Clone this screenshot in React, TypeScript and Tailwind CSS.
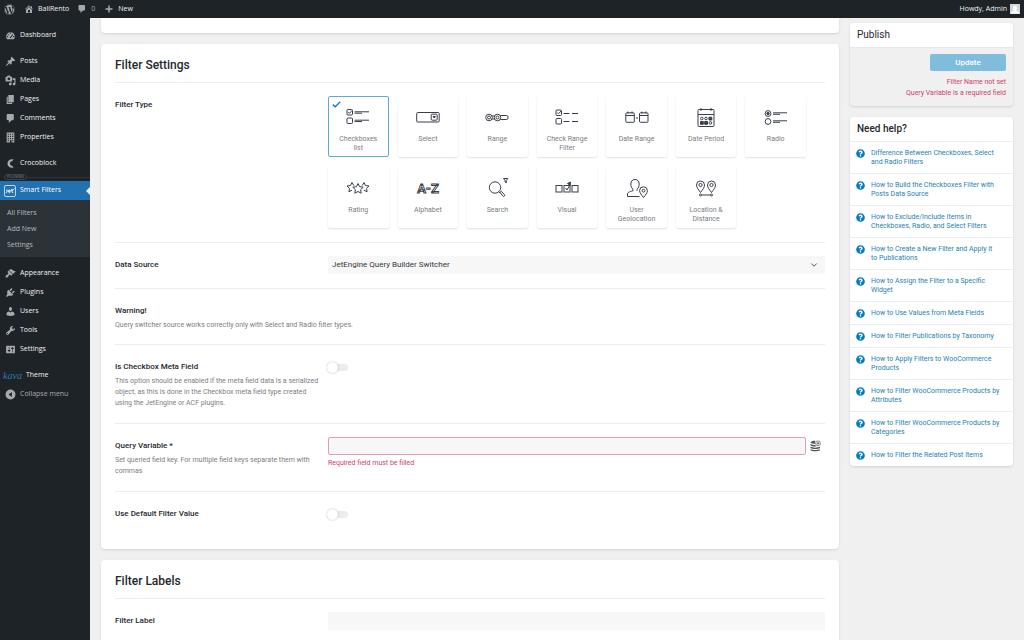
import { useState } from "react";
import type { ReactNode } from "react";
import { ChevronDown } from "lucide-react";
import { FaWordpress, FaQuestionCircle } from "react-icons/fa";

const dashicons = {
    home: "M16 8.5l1.53 1.53-1.06 1.06L10 4.6l-6.47 6.49-1.06-1.06L10 2.5l4 4v-2h2v4zm-6-2.46l6 5.99V18H4v-5.97zM12 17v-5H8v5h4z",
    comments: "M5 2h9c1.1 0 2 .9 2 2v7c0 1.1-.9 2-2 2h-2l-5 5v-5H5c-1.1 0-2-.9-2-2V4c0-1.1.9-2 2-2z",
    plus: "M17 8.5v3h-5.5V17h-3v-5.5H3v-3h5.5V3h3v5.5z",
    dashboard: "M3.76 17h12.48c1.1-1.46 1.76-3.26 1.76-5.2 0-4.2-3.58-7.8-8-7.8s-8 3.6-8 7.8c0 1.94.65 3.74 1.76 5.2zM9 5h2v2H9zM5 7.500h2v2H5zM13.5 7.5L15 9l-4 4.5c0 1-.5 1.5-1.2 1.5s-1.3-.5-1.3-1.2.5-1.3 1.3-1.3zM3.5 11h2v2h-2zM15 11h2v2h-2z",
    post: "M10.44 3.02l1.82-1.82 6.36 6.35-1.83 1.82c-1.05-.68-2.48-.57-3.41.36l-.75.75c-.92.93-1.04 2.35-.35 3.41l-1.83 1.82-2.41-2.41-2.8 2.79c-.42.42-3.38 2.71-3.8 2.29s1.86-3.39 2.28-3.81l2.79-2.79L4.1 9.36l1.83-1.82c1.05.69 2.48.57 3.4-.36l.75-.75c.93-.92 1.05-2.35.36-3.41z",
    media: "M13 11V4c0-.55-.45-1-1-1h-1.67L9 1H5L3.67 3H2c-.55 0-1 .45-1 1v7c0 .55.45 1 1 1h10c.55 0 1-.45 1-1zM7 4.5c1.38 0 2.5 1.12 2.5 2.5S8.38 9.5 7 9.5 4.5 8.38 4.5 7 5.62 4.5 7 4.5zM14 6h5v10.5c0 1.38-1.12 2.5-2.5 2.5S14 17.88 14 16.5s1.12-2.5 2.5-2.5c.17 0 .34.02.5.05V9h-3V6zm-4 8.05V13h2v3.5c0 1.38-1.12 2.5-2.5 2.5S7 17.88 7 16.5 8.12 14 9.5 14c.17 0 .34.02.5.05z",
    page: "M6 15V2h10v13H6zm-1 1h8v2H3V5h2v11z",
    building: "M3 1h14v18h-5v-4H9v4H3zM5 3v2h2V3zM9 3v2h2V3zM13 3v2h2V3zM5 7v2h2V7zM9 7v2h2V7zM13 7v2h2V7zM5 11v2h2v-2zM9 11v2h2v-2zM13 11v2h2v-2zM5 15v2h2v-2zM13 15v2h2v-2z",
    croco: "M15.5 2.5C9 1 4.5 5 4.5 10s4.5 9 11 7.5L13 14c-2.5 0-4-1.8-4-4s1.5-4 4-4z",
    appearance: "M14.48 11.06L7.41 3.99l1.5-1.5c.5-.56 2.3-.47 3.51.32 1.21.8 1.43 1.28 2.91 2.1 1.18.64 2.45 1.26 4.45.85zm-.71.71L6.7 4.7 4.93 6.47c-.39.39-.39 1.02 0 1.41l1.06 1.06c.39.39.39 1.03 0 1.42-.6.6-1.43 1.11-2.21 1.69-.35.26-.7.53-1.01.84C1.43 14.23.4 16.08 1.4 17.07c.99 1 2.84-.03 4.18-1.36.31-.31.58-.66.85-1.02.57-.78 1.08-1.61 1.69-2.21.39-.39 1.02-.39 1.41 0l1.06 1.06c.39.39 1.02.39 1.41 0z",
    plugins: "M13.11 4.36L9.87 7.6 8 5.73l3.24-3.24c.35-.34 1.05-.2 1.56.32.52.51.66 1.21.31 1.55zm-8 1.77l.91-1.12 9.01 9.01-1.19.84c-.71.71-2.63 1.16-3.82 1.16H6.14L4.9 17.26c-.59.59-1.54.59-2.12 0-.59-.58-.59-1.53 0-2.12l1.24-1.24v-3.88c0-1.13.4-3.19 1.09-3.89zm7.26 3.97l3.24-3.24c.34-.35 1.04-.21 1.55.31.52.51.66 1.21.31 1.55l-3.24 3.25z",
    users: "M10 9.25c-2.27 0-2.73-3.44-2.73-3.44C7 4.02 7.82 2 9.97 2c2.16 0 2.98 2.02 2.71 3.81 0 0-.41 3.44-2.68 3.44zm0 2.57L12.72 10c2.39 0 4.52 2.33 4.52 4.53v2.49s-3.65 1.13-7.24 1.13c-3.65 0-7.24-1.13-7.24-1.13v-2.49c0-2.25 1.94-4.48 4.47-4.48z",
    tools: "M16.68 9.77c-1.34 1.34-3.3 1.67-4.95.99l-5.41 6.52c-.99.99-2.59.99-3.58 0s-.99-2.59 0-3.57l6.52-5.42c-.68-1.65-.35-3.61.99-4.95 1.28-1.28 3.12-1.62 4.72-1.06l-2.89 2.89 2.82 2.82 2.86-2.87c.53 1.58.18 3.39-1.08 4.65zM3.81 16.21c.4.39 1.04.39 1.43 0 .4-.4.4-1.04 0-1.43-.39-.4-1.03-.4-1.43 0-.39.39-.39 1.03 0 1.43z",
    settings: "M18 16V4c0-.55-.45-1-1-1H3c-.55 0-1 .45-1 1v12c0 .55.45 1 1 1h14c.55 0 1-.45 1-1zM8 11h1c.55 0 1 .45 1 1s-.45 1-1 1H8v1.5c0 .28-.22.5-.5.5s-.5-.22-.5-.5V13H6c-.55 0-1-.45-1-1s.45-1 1-1h1V5.5c0-.28.22-.5.5-.5s.5.22.5.5V11zm5-2h-1c-.55 0-1-.45-1-1s.45-1 1-1h1V5.5c0-.28.22-.5.5-.5s.5.22.5.5V7h1c.55 0 1 .45 1 1s-.45 1-1 1h-1v5.5c0 .28-.22.5-.5.5s-.5-.22-.5-.5V9z",
    collapse: "M10 1a9 9 0 1 0 0 18 9 9 0 0 0 0-18zm2.5 4.5v9L6.5 10z",
};

type DashiconName = keyof typeof dashicons;

const Dashicon = ({ name, className = "size-[11px]" }: { name: DashiconName; className?: string }) => (
    <svg viewBox="0 0 20 20" fill="currentColor" fillRule="evenodd" className={`shrink-0 ${className}`} aria-hidden="true">
        <path d={dashicons[name]} />
    </svg>
);

const contentLinks: { label: string; icon: DashiconName }[] = [
    { label: "Posts", icon: "post" },
    { label: "Media", icon: "media" },
    { label: "Pages", icon: "page" },
    { label: "Comments", icon: "comments" },
    { label: "Properties", icon: "building" },
];

const adminLinks: { label: string; icon: DashiconName }[] = [
    { label: "Appearance", icon: "appearance" },
    { label: "Plugins", icon: "plugins" },
    { label: "Users", icon: "users" },
    { label: "Tools", icon: "tools" },
    { label: "Settings", icon: "settings" },
];

const helpLinks = [
    "Difference Between Checkboxes, Select and\u00a0Radio Filters",
    "How to Build the Checkboxes Filter with Posts Data Source",
    "How to Exclude/Include Items in Checkboxes, Radio, and Select Filters",
    "How to Create a New Filter and Apply It to\u00a0Publications",
    "How to Assign the Filter to a Specific Widget",
    "How to Use Values from Meta Fields",
    "How to Filter Publications by Taxonomy",
    "How to Apply Filters to WooCommerce Products",
    "How to Filter WooCommerce Products by Attributes",
    "How to Filter WooCommerce Products by Categories",
    "How to Filter the Related Post Items",
];

const filterTypes: { value: string; label: string; icon: ReactNode }[] = [
    {
        value: "checkboxes",
        label: "Checkboxes list",
        icon: (
            <>
                <rect x="1" y="3.5" width="5.5" height="5.5" rx="1" />
                <path d="M2.3 6l1.200 1.300L6 4.500" />
                <rect x="1" y="12" width="5.5" height="5.5" rx="1" />
                <path d="M8.5 5.800H23M8.500 7.200H16M8.500 14.200H23M8.500 15.600H16" />
            </>
        ),
    },
    {
        value: "select",
        label: "Select",
        icon: (
            <>
                <rect x="0.7" y="6.5" width="22.5" height="9.5" rx="1" />
                <rect x="15.2" y="8.2" width="6" height="6" rx="1" />
                <path d="M17 10.500h2.500l-1.250 1.500z" fill="currentColor" />
            </>
        ),
    },
    {
        value: "range",
        label: "Range",
        icon: (
            <>
                <circle cx="4" cy="11.5" r="3.3" />
                <circle cx="4" cy="11.5" r="1.5" />
                <circle cx="12.5" cy="11.5" r="3.3" />
                <circle cx="12.5" cy="11.5" r="1.5" />
                <path d="M6.800 10h3M6.800 13h3M15.500 9.500h6A1.500 1.500 0 0 1 23 11v1a1.500 1.500 0 0 1-1.500 1.500h-6" />
            </>
        ),
    },
    {
        value: "check-range",
        label: "Check Range Filter",
        icon: (
            <>
                <rect x="1" y="4" width="5.5" height="5.5" rx="1" />
                <path d="M2.300 6.500l1.200 1.300L6 5" />
                <rect x="1" y="12.5" width="5.5" height="5.5" rx="1" />
                <path d="M8.500 7.500h6M17 7.500h6M8.500 15.500h6M17 15.500h6" />
            </>
        ),
    },
    {
        value: "date-range",
        label: "Date Range",
        icon: (
            <>
                <rect x="0.8" y="6.8" width="8.5" height="9.5" rx="1" />
                <rect x="14.5" y="6.8" width="8.5" height="9.5" rx="1" />
                <path d="M.8 9.500h8.500M14.500 9.500H23M3 5.500v2M7 5.500v2M16.800 5.500v2M20.800 5.500v2M10.800 12H13" />
            </>
        ),
    },
    {
        value: "date-period",
        label: "Date Period",
        icon: (
            <>
                <rect x="4" y="3.5" width="16" height="17" rx="1" />
                <path d="M4 8.500h16M7 2v3M17 2v3" />
                <circle cx="7.8" cy="12.5" r="1.3" />
                <circle cx="12" cy="12.5" r="1.3" />
                <path d="M15 11.200h2.800V14H15zM6.500 15.500h2.800v2.800H6.500zM10.700 15.500h2.800v2.800h-2.800z" fill="currentColor" />
                <circle cx="16.4" cy="16.9" r="1.3" />
            </>
        ),
    },
    {
        value: "radio",
        label: "Radio",
        icon: (
            <>
                <circle cx="4" cy="7.5" r="2.9" />
                <circle cx="4" cy="7.5" r="1.2" fill="currentColor" />
                <circle cx="4" cy="15.5" r="2.9" />
                <path d="M9 6.800h14M9 8.300h7M9 14.800h14M9 16.300h7" />
            </>
        ),
    },
    {
        value: "rating",
        label: "Rating",
        icon: (
            <>
                <path d="M7.800 8.500L6 5.500 4.500 8.500l-3.500.5 2.500 2.400-.6 3.400 3.100-1.600M16.200 8.500L18 5.500l1.500 3 3.500.5-2.500 2.400.6 3.400-3.100-1.600" />
                <path d="M12 6.500l1.600 3.200 3.600.5-2.600 2.500.6 3.500-3.200-1.700-3.200 1.700.6-3.500-2.600-2.500 3.600-.5z" />
            </>
        ),
    },
    {
        value: "alphabet",
        label: "Alphabet",
        icon: (
            <text x="12" y="16" textAnchor="middle" fontFamily="Roboto, sans-serif" fontSize="13" fontWeight="700" fill="white" strokeWidth="0.9">
                A-Z
            </text>
        ),
    },
    {
        value: "search",
        label: "Search",
        icon: (
            <>
                <circle cx="10" cy="10.5" r="5.7" />
                <path d="M13.800 14.800L15 16M15 15.300l1.300-1 3 3.200a1 1 0 0 1-1.500 1.600zM18.500 1.500h4.300l-1.500 2v2.300L20 5V3.500z" />
            </>
        ),
    },
    {
        value: "visual",
        label: "Visual",
        icon: (
            <>
                <rect x="1" y="8.5" width="6" height="6.5" />
                <rect x="9" y="8.5" width="6" height="6.5" />
                <rect x="17" y="8.5" width="6" height="6.5" />
                <path d="M10.500 11l1.500 2 3.500-6" />
                <path d="M12.500 6.500l3-1.500-.3 3.300z" fill="currentColor" />
            </>
        ),
    },
    {
        value: "user-geolocation",
        label: "User Geolocation",
        icon: (
            <>
                <path d="M14.500 19.500H2.500V17c0-1.700 1.500-2 5.500-3.300v-1.500C6.500 11 5.800 9.500 5.800 7c0-2.900 1.700-4.500 4.200-4.500s4.200 1.600 4.200 4.500c0 2.200-.6 4-2.200 5.200v1.500" />
                <path d="M18.500 20.500c-2-2.500-3.900-4.700-3.900-6.800a3.900 3.900 0 0 1 7.800 0c0 2.100-1.900 4.300-3.900 6.800z" />
                <circle cx="18.5" cy="13.7" r="1.4" />
            </>
        ),
    },
    {
        value: "location",
        label: "Location & Distance",
        icon: (
            <>
                <path d="M6.500 15.500c-2-2.700-4-5-4-7.500a4 4 0 0 1 8 0c0 2.500-2 4.800-4 7.500zM17.500 15.500c-2-2.700-4-5-4-7.500a4 4 0 0 1 8 0c0 2.500-2 4.800-4 7.500z" />
                <circle cx="6.5" cy="8" r="1.6" />
                <circle cx="17.5" cy="8" r="1.6" />
                <circle cx="6.5" cy="18" r="1" />
                <circle cx="17.5" cy="18" r="1" />
                <path d="M7.500 18h9" />
            </>
        ),
    },
];

const AdminBar = () => (
    <header className="flex h-[18px] shrink-0 items-center bg-[#1d2327] px-1 font-['Open_Sans',sans-serif] text-[7px] text-[#f0f0f1]">
        <a href="#wordpress" aria-label="About WordPress">
            <FaWordpress className="size-[11px] text-[#a7aaad]" />
        </a>
        <a href="#site" className="ml-[9px] flex items-center gap-1">
            <Dashicon name="home" className="size-[10px] text-[#a7aaad]" />
            BaliRento
        </a>
        <a href="#comments" className="ml-2 flex items-center gap-1 text-[#a7aaad]">
            <Dashicon name="comments" className="size-[10px]" />
            0
        </a>
        <a href="#new" className="ml-[9px] flex items-center gap-1">
            <Dashicon name="plus" className="size-[10px] text-[#a7aaad]" />
            New
        </a>
        <a href="#profile" className="ml-auto flex items-center gap-[3px]">
            Howdy, Admin
            <svg viewBox="0 0 10 10" className="size-[10px]" aria-hidden="true">
                <rect width="10" height="10" fill="#d5d5d5" />
                <path d="M0.500 9.500C1 7.500 3 7 4 6.700 2.500 5 3 1.500 5 1.500S7.500 5 6 6.700c1 .3 3 .8 3.500 2.800z" fill="#fff" />
            </svg>
        </a>
    </header>
);

const MenuLink = ({ label, icon }: { label: string; icon: DashiconName }) => (
    <a href={`#${label.toLowerCase()}`} className="flex h-[19px] items-center gap-1 pl-[5px] hover:text-[#72aee6]">
        <Dashicon name={icon} className="size-[11px] text-[#a7aaad]" />
        {label}
    </a>
);

const Sidebar = () => (
    <nav className="w-[90px] shrink-0 bg-[#1d2327] pt-2 font-['Open_Sans',sans-serif] text-[7px] text-[#f0f0f1]">
        <MenuLink label="Dashboard" icon="dashboard" />
        <div className="mt-[7px]">
            {contentLinks.map((link) => (
                <MenuLink key={link.label} {...link} />
            ))}
        </div>
        <div className="mt-[7px]">
            <MenuLink label="Crocoblock" icon="croco" />
        </div>
        <div className="flex h-2 items-center pl-1">
            <span className="rounded-full border border-[#3c434a] px-[2px] text-[4px] leading-[4px] text-[#8c8f94]">PLUGINS</span>
            <span className="h-px flex-1 bg-[#2c3338]" />
        </div>
        <a href="#smart-filters" className="relative flex h-[19px] items-center gap-1 bg-[#2271b1] pl-1 text-white">
            <svg viewBox="0 0 12 12" className="size-3" fill="none" stroke="white" aria-hidden="true">
                <rect x="0.5" y="0.5" width="11" height="11" rx="1.5" strokeWidth="0.7" />
                <path d="M3 4.500v2c0 1-.5 1.200-1.200 1.200M4.500 6.200h2c0-1.500-2-1.700-2.200 0-.1 1.300 1.200 1.800 2 1.200M8 4v2.600c0 .8.500 1.100 1.200 1M7.300 5h2.200M9.500 4.500l1-1" strokeWidth="1" />
            </svg>
            Smart Filters
            <span className="absolute top-1/2 right-0 -translate-y-1/2 border-4 border-l-0 border-transparent border-r-[#f0f0f1]" />
        </a>
        <div className="flex flex-col bg-[#2c3338] pt-[5px] pb-1 pl-[7px] text-[#b4b9be]">
            {["All Filters", "Add New", "Settings"].map((label) => (
                <a key={label} href={`#${label.replace(" ", "-").toLowerCase()}`} className="h-4 leading-4 hover:text-[#72aee6]">
                    {label}
                </a>
            ))}
        </div>
        <div className="mt-[7px]">
            {adminLinks.map((link) => (
                <MenuLink key={link.label} {...link} />
            ))}
        </div>
        <a href="#theme" className="mt-[7px] flex h-[19px] items-center gap-1 pl-[3px]">
            <span className="font-['Liberation_Serif',serif] text-[10px] text-[#2f76b8] italic">kava</span>
            Theme
        </a>
        <button type="button" className="flex h-[19px] items-center gap-1 pl-[5px] text-[#a7aaad]">
            <Dashicon name="collapse" />
            Collapse menu
        </button>
    </nav>
);

const Card = ({ title, children }: { title: string; children: ReactNode }) => (
    <section className="rounded-sm bg-white px-[14px] pb-3 shadow-sm">
        <h2 className="border-b border-[#ececec] pt-[14px] pb-[9px] text-[12px] leading-[15px] font-medium text-[#23282d]">{title}</h2>
        {children}
    </section>
);

interface RowProps {
    label: string;
    htmlFor?: string;
    description?: string;
    last?: boolean;
    children: ReactNode;
}

const Row = ({ label, htmlFor, description, last, children }: RowProps) => (
    <div className={`flex pt-[13px] pb-[14px] ${last ? "" : "border-b border-[#ececec]"}`}>
        <div className="w-[30%] shrink-0 pr-1">
            <label htmlFor={htmlFor} className="block text-[8px] leading-[18px] font-medium text-[#23282d]">
                {label}
            </label>
            {description && <p className="text-[7px] leading-[11px] text-[#7b7e81]">{description}</p>}
        </div>
        <div className="min-w-0 flex-1">{children}</div>
    </div>
);

const Toggle = ({ id }: { id: string }) => (
    <input
        id={id}
        type="checkbox"
        role="switch"
        className="relative mt-[6px] block h-[7px] w-5 appearance-none rounded-full bg-[#ececec] before:absolute before:-top-[2px] before:-left-px before:size-[11px] before:rounded-full before:bg-white before:shadow-[0_0_2px_rgba(0,0,0,0.3)] checked:bg-[#7fbde0] checked:before:left-[10px]"
    />
);

const FilterTypePicker = () => {
    const [selected, setSelected] = useState("checkboxes");

    return (
        <div className="grid grid-cols-7 gap-x-[9px] gap-y-[10px] pr-[19px]">
            {filterTypes.map(({ value, label, icon }) => (
                <label
                    key={value}
                    className={`relative flex h-[61px] cursor-pointer flex-col items-center rounded-xs border pt-[9px] ${selected === value ? "border-[#5fa9d3]" : "border-transparent shadow-[0_1px_2px_rgba(0,0,0,0.12)]"
                        }`}
                >
                    <input
                        type="radio"
                        name="filter-type"
                        value={value}
                        checked={selected === value}
                        onChange={() => setSelected(value)}
                        className="sr-only"
                    />
                    {selected === value && (
                        <svg viewBox="0 0 9 7" className="absolute top-1 left-[3px] h-[7px] w-[9px]" fill="none" stroke="#007cba" strokeWidth="1.2" aria-hidden="true">
                            <path d="M.8 3.500l2.400 2.300L8.300.8" />
                        </svg>
                    )}
                    <svg viewBox="0 0 24 22" className="h-[22px] w-6 text-[#3a3f4a]" fill="none" stroke="currentColor" strokeWidth="1" aria-hidden="true">
                        {icon}
                    </svg>
                    <span className="mt-[7px] px-[6px] text-center text-[7px] leading-[9px] text-[#7b7e81]">{label}</span>
                </label>
            ))}
        </div>
    );
};

const FilterSettings = () => (
    <Card title="Filter Settings">
        <Row label="Filter Type">
            <FilterTypePicker />
        </Row>
        <Row label="Data Source" htmlFor="data-source">
            <div className="relative">
                <select id="data-source" className="block h-[18px] w-full appearance-none bg-[#f7f7f7] px-1 text-[8px] text-[#32373c]">
                    <option>JetEngine Query Builder Switcher</option>
                </select>
                <ChevronDown className="pointer-events-none absolute top-1 right-[6px] size-[10px] text-[#32373c]" />
            </div>
        </Row>
        <div className="border-b border-[#ececec] py-[13px]">
            <h3 className="text-[8px] leading-[18px] font-medium text-[#23282d]">Warning!</h3>
            <p className="text-[7px] leading-[11px] text-[#7b7e81]">Query switcher source works correctly only with Select and Radio filter types.</p>
        </div>
        <Row
            label="Is Checkbox Meta Field"
            htmlFor="is-checkbox-meta"
            description="This option should be enabled if the meta field data is a serialized object, as this is done in the Checkbox meta field type created using the JetEngine or ACF plugins."
        >
            <Toggle id="is-checkbox-meta" />
        </Row>
        <Row
            label="Query Variable *"
            htmlFor="query-variable"
            description="Set queried field key. For multiple field keys separate them with commas"
        >
            <div className="flex items-center gap-1">
                <input id="query-variable" type="text" className="h-[18px] min-w-0 flex-1 rounded-xs border border-[#e39db3] bg-[#f7f7f7] px-1 text-[8px]" />
                <button type="button" aria-label="Pick a field" className="w-[15px] text-[#50555a]">
                    <svg viewBox="0 0 11 12" className="h-3 w-[11px]" fill="currentColor" aria-hidden="true">
                        <path d="M.5 2.500C1 1 4 .6 5.500.8A3.500 3.500 0 0 0 5 3.800C3 3.800.8 3.500.5 2.500zM.5 4c1.300.8 3 1 4.700 1 .4.700 1 1.200 1.800 1.500-2.500.3-5.500 0-6.500-1zM.5 6.800c2.500 1.100 7 1.100 9.500 0V8c-2 1.300-7.500 1.300-9.500 0zM.5 9.200c2.500 1.100 7 1.100 9.500 0v1c-2 1.500-7.500 1.500-9.500 0z" />
                        <circle cx="8" cy="3.3" r="2.4" fill="none" stroke="currentColor" strokeWidth="0.7" />
                        <path d="M8 2v2.600M6.700 3.300h2.600" stroke="currentColor" strokeWidth="0.8" />
                    </svg>
                </button>
            </div>
            <p className="mt-[3px] text-[7px] leading-[11px] text-[#cc3f6b]">Required field must be filled</p>
        </Row>
        <Row label="Use Default Filter Value" htmlFor="use-default" last>
            <Toggle id="use-default" />
        </Row>
    </Card>
);

const App = () => (
    <div className="flex h-screen flex-col overflow-hidden bg-[#f0f0f1] font-['Roboto',sans-serif]">
        <AdminBar />
        <div className="flex min-h-0 flex-1">
            <Sidebar />
            <div className="flex min-w-0 flex-1 items-start gap-[11px] px-[11px]">
                <main className="flex min-w-0 flex-1 flex-col gap-[11px]">
                    <div className="h-[15px] rounded-b-sm bg-white shadow-sm" />
                    <FilterSettings />
                    <Card title="Filter Labels">
                        <Row label="Filter Label" htmlFor="filter-label" last>
                            <input id="filter-label" type="text" className="block h-[18px] w-full bg-[#f7f7f7] px-1 text-[8px]" />
                        </Row>
                    </Card>
                </main>

                <aside className="mt-[5px] flex w-[163px] shrink-0 flex-col gap-[11px]">
                    <section className="overflow-hidden rounded-sm bg-[#f0f0f0] shadow-sm">
                        <h2 className="bg-white px-[7px] text-[10px] leading-6 text-[#23282d]">Publish</h2>
                        <div className="flex flex-col items-end border-t border-[#e8e8e8] px-[7px] pt-[6px] pb-[7px] text-[7px] leading-[11px] text-[#cc3f6b]">
                            <button type="button" className="mb-[6px] h-[17px] w-[76px] rounded-xs bg-[#80bddd] text-[8px] font-medium text-white">
                                Update
                            </button>
                            <p>Filter Name not set</p>
                            <p>Query Variable is a required field</p>
                        </div>
                    </section>

                    <section className="rounded-sm bg-white shadow-sm">
                        <h2 className="px-[7px] text-[10px] leading-6 font-medium text-[#23282d]">Need help?</h2>
                        <ul>
                            {helpLinks.map((link) => (
                                <li key={link} className="border-t border-[#ececec]">
                                    <a href="#help" className="flex gap-[6px] pt-[7px] pr-[7px] pb-[6px] pl-[6px] text-[7px] leading-[9px] text-[#2a7fb0]">
                                        <FaQuestionCircle className="size-[9px] shrink-0 text-[#007cba]" />
                                        {link}
                                    </a>
                                </li>
                            ))}
                        </ul>
                    </section>
                </aside>
            </div>
        </div>
    </div>
);

export default App;
